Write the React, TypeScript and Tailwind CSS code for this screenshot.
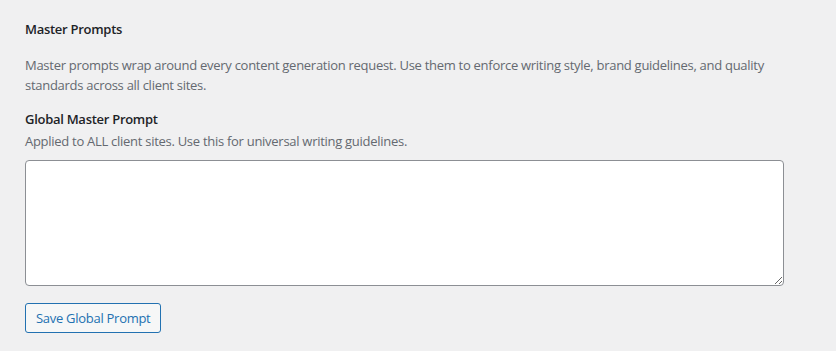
export default function App() {
  return (
    <div className="min-h-screen w-full bg-[#f0f0f1] pl-[25px] pr-[53px] pt-[19px] font-['Open_Sans',sans-serif] text-[13px] tracking-[-0.28px] text-[#3c434a]">
      <h2 className="text-[13px] font-semibold leading-[20px] text-[#1d2327]">Master Prompts</h2>
      <p className="mt-[16px] leading-[20px] text-[#646970]">
        Master prompts wrap around every content generation request. Use them to enforce writing style, brand guidelines, and quality standards across all client sites.
      </p>
      <div className="mt-[14px]">
        <label className="block font-semibold leading-[20px] text-[#1d2327]">Global Master Prompt</label>
        <p className="mt-[2px] leading-[20px] text-[#646970]">Applied to ALL client sites. Use this for universal writing guidelines.</p>
        <textarea className="mt-[9px] block h-[126px] w-[759px] rounded-[4px] border border-[#8c8f94] bg-white px-2 py-1 text-[#2c3338] outline-none" />
      </div>
      <button className="mt-[17px] h-[30px] rounded-[3px] border border-[#2271b1] bg-[#f6f7f7] px-[10px] text-[13px] leading-[28px] text-[#2271b1]">
        Save Global Prompt
      </button>
    </div>
  );
}
